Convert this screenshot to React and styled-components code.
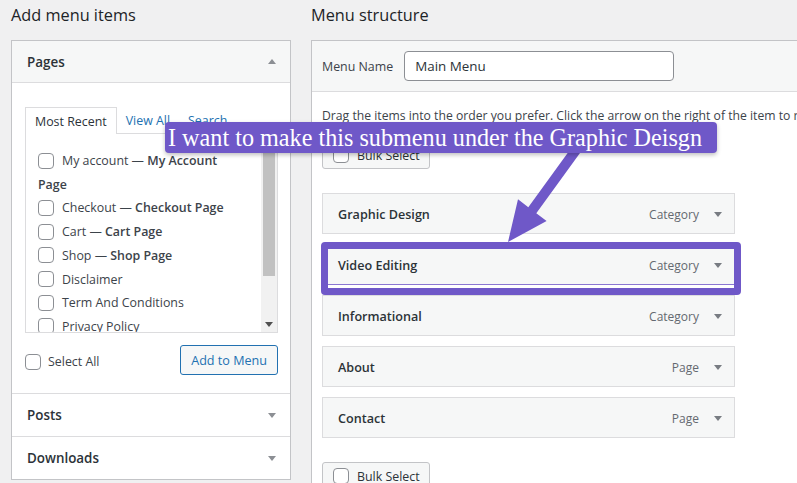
import React from "react";
import styled, { createGlobalStyle } from "styled-components";

const Global = createGlobalStyle`
  html, body { margin: 0; padding: 0; background: #f0f0f1; }
  body { font-family: "Open Sans", "Noto Sans", sans-serif; color: #3c434a; }
  * { box-sizing: border-box; }
`;

const Page = styled.div`
  position: relative;
  width: 797px;
  height: 483px;
  overflow: hidden;
  display: flex;
  gap: 20px;
  padding: 0 0 0 11px;
  background: #f0f0f1;
`;

const Column = styled.div`
  flex: none;
  width: ${(p) => p.$w}px;
  display: flex;
  flex-direction: column;
`;

const Heading = styled.h2`
  margin: 0 0 10px;
  font-size: 16.3px;
  line-height: 30px;
  font-weight: 400;
  color: #1d2327;
`;

const Accordion = styled.div`
  border: 1px solid #c3c4c7;
  background: #fff;
`;

const Section = styled.div`
  & + & { border-top: 1px solid #dcdcde; }
`;

const SectionTitle = styled.div`
  height: 42px;
  display: flex;
  align-items: center;
  justify-content: space-between;
  padding: 0 14px 0 15px;
  background: ${(p) => (p.$open ? "#f6f7f7" : "#fff")};
  border-bottom: ${(p) => (p.$open ? "1px solid #dcdcde" : "none")};
  font-size: 13.4px;
  font-weight: 600;
  color: #2c3338;
`;

const Tri = styled.span`
  width: 0;
  height: 0;
  border-left: 4.5px solid transparent;
  border-right: 4.5px solid transparent;
  ${(p) =>
    p.$up
      ? `border-bottom: 5px solid ${p.$c || "#8c8f94"};`
      : `border-top: 5px solid ${p.$c || "#8c8f94"};`}
`;

const SectionBody = styled.div`
  padding: 24px 12px 18px 13px;
`;

const Tabs = styled.div`
  display: flex;
  align-items: flex-end;
  height: 26px;
  font-size: 12.4px;
`;

const Tab = styled.div`
  height: 26px;
  padding: 0 9px;
  display: flex;
  align-items: center;
  ${(p) =>
    p.$active
      ? `border: 1px solid #dcdcde; border-bottom: none; background: #fff; color: #2c3338; position: relative; z-index: 1; margin-bottom: -1px; height: 27px;`
      : `color: #2271b1;`}
`;

const ListBox = styled.div`
  height: 200px;
  border: 1px solid #dcdcde;
  display: flex;
  overflow: hidden;
`;

const List = styled.ul`
  flex: 1;
  list-style: none;
  margin: 0;
  padding: 15px 14px 0 12px;
  font-size: 12.4px;
  line-height: 23.7px;
  color: #3c434a;
`;

const Item = styled.li`
  margin: 0;
`;

const Box = styled.span`
  display: inline-block;
  width: 16px;
  height: 16px;
  border: 1px solid #8c8f94;
  border-radius: 4px;
  background: #fff;
  vertical-align: -3.5px;
  margin-right: ${(p) => p.$mr ?? 8}px;
`;

const State = styled.span`
  font-weight: 600;
  color: #3c434a;
`;

const Scrollbar = styled.div`
  flex: none;
  width: 16px;
  background: #f1f1f1;
  display: flex;
  flex-direction: column;
  align-items: center;
`;

const ScrollBtn = styled.div`
  flex: none;
  height: 16px;
  width: 16px;
  display: flex;
  align-items: center;
  justify-content: center;
`;

const Thumb = styled.div`
  width: 12px;
  height: 126px;
  background: #c1c1c1;
`;

const Spacer = styled.div`
  flex: 1;
`;

const Actions = styled.div`
  margin-top: 12px;
  display: flex;
  align-items: center;
  justify-content: space-between;
`;

const CheckLabel = styled.label`
  display: flex;
  align-items: center;
  padding-top: 3px;
  font-size: 12.4px;
  color: #3c434a;
`;

const BlueButton = styled.button`
  height: 30px;
  padding: 0 10px;
  border: 1px solid #2271b1;
  border-radius: 3px;
  background: #f6f7f7;
  color: #2271b1;
  font-family: inherit;
  font-size: 12.6px;
`;

const MenuPanel = styled.div`
  border: 1px solid #c3c4c7;
  border-right: none;
  background: #fff;
`;

const MenuHeader = styled.div`
  height: 51px;
  display: flex;
  align-items: center;
  gap: 11px;
  padding: 0 10px;
  background: #f6f7f7;
  border-bottom: 1px solid #dcdcde;
  font-size: 12.4px;
  color: #3c434a;
`;

const NameInput = styled.div`
  width: 270px;
  height: 30px;
  border: 1px solid #8c8f94;
  border-radius: 4px;
  background: #fff;
  display: flex;
  align-items: center;
  padding: 0 10px;
  font-size: 13.4px;
  color: #2c3338;
`;

const MenuBody = styled.div`
  padding: 14px 10px 40px;
`;

const Instructions = styled.p`
  margin: 0;
  font-size: 12.2px;
  line-height: 20px;
  white-space: nowrap;
  color: #3c434a;
`;

const BulkButton = styled.div`
  margin-top: ${(p) => p.$mt}px;
  width: 108px;
  height: 28px;
  border: 1px solid #c3c4c7;
  border-radius: 3px;
  background: #f6f7f7;
  display: flex;
  align-items: center;
  padding-left: 10px;
  font-size: 12.4px;
  color: #2c3338;
`;

const MenuItems = styled.div`
  margin-top: 24px;
  width: 413px;
  display: flex;
  flex-direction: column;
  gap: 10px;
`;

const ItemWrap = styled.div`
  position: relative;
`;

const MenuItem = styled.div`
  height: 41px;
  display: flex;
  align-items: center;
  padding: 1px 12px 0 15px;
  background: #f6f7f7;
  border: 1px solid #dcdcde;
  border-bottom-color: ${(p) => (p.$hl ? "#8a76d2" : "#dcdcde")};
`;

const ItemTitle = styled.span`
  flex: 1;
  font-size: 12.6px;
  font-weight: 600;
  color: #2c3338;
`;

const ItemType = styled.span`
  font-size: 12px;
  color: #646970;
  margin-right: 15px;
`;

const Frame = styled.div`
  position: absolute;
  left: -1px;
  right: -6px;
  top: -2px;
  bottom: -10px;
  border: 7px solid #6f58c8;
  border-radius: 4px;
  pointer-events: none;
`;

const Callout = styled.div`
  position: absolute;
  left: 165px;
  top: 122px;
  width: 552px;
  height: 31px;
  background: #6f58c8;
  border-radius: 4px;
  box-shadow: 0 2px 4px rgba(0, 0, 0, 0.25);
  color: #fff;
  font-family: "Liberation Serif", "Times New Roman", serif;
  font-size: 24.2px;
  line-height: 31px;
  padding-left: 3px;
  white-space: nowrap;
  z-index: 3;
`;

const ArrowSvg = styled.svg`
  position: absolute;
  left: 500px;
  top: 145px;
  z-index: 2;
`;

const pages = [
  ["My account", "My Account Page"],
  ["Checkout", "Checkout Page"],
  ["Cart", "Cart Page"],
  ["Shop", "Shop Page"],
  ["Disclaimer"],
  ["Term And Conditions"],
  ["Privacy Policy"],
  ["Refund Policy"],
];

const menuItems = [
  ["Graphic Design", "Category"],
  ["Video Editing", "Category", true],
  ["Informational", "Category"],
  ["About", "Page"],
  ["Contact", "Page"],
];

export default function App() {
  return (
    <>
      <Global />
      <Page>
        <Column $w={280}>
          <Heading>Add menu items</Heading>
          <Accordion>
            <Section>
              <SectionTitle $open>
                Pages <Tri $up />
              </SectionTitle>
              <SectionBody>
                <Tabs>
                  <Tab $active>Most Recent</Tab>
                  <Tab>View All</Tab>
                  <Tab>Search</Tab>
                </Tabs>
                <ListBox>
                  <List>
                    {pages.map(([t, s], i) => (
                      <Item key={i}>
                        <Box />
                        {t}
                        {s && (
                          <>
                            {" — "}
                            <State>{s}</State>
                          </>
                        )}
                      </Item>
                    ))}
                  </List>
                  <Scrollbar>
                    <ScrollBtn>
                      <Tri $up $c="#505050" />
                    </ScrollBtn>
                    <Thumb />
                    <Spacer />
                    <ScrollBtn>
                      <Tri $c="#505050" />
                    </ScrollBtn>
                  </Scrollbar>
                </ListBox>
                <Actions>
                  <CheckLabel>
                    <Box $mr={7} />
                    Select All
                  </CheckLabel>
                  <BlueButton>Add to Menu</BlueButton>
                </Actions>
              </SectionBody>
            </Section>
            <Section>
              <SectionTitle>
                Posts <Tri />
              </SectionTitle>
            </Section>
            <Section>
              <SectionTitle>
                Downloads <Tri />
              </SectionTitle>
            </Section>
          </Accordion>
        </Column>
        <Column $w={520}>
          <Heading>Menu structure</Heading>
          <MenuPanel>
            <MenuHeader>
              Menu Name
              <NameInput>Main Menu</NameInput>
            </MenuHeader>
            <MenuBody>
              <Instructions>
                Drag the items into the order you prefer. Click the arrow on the right of the item to reveal additional configuration options.
              </Instructions>
              <BulkButton $mt={15}>
                <Box />
                Bulk Select
              </BulkButton>
              <MenuItems>
                {menuItems.map(([t, type, hl]) => (
                  <ItemWrap key={t}>
                    <MenuItem $hl={hl}>
                      <ItemTitle>{t}</ItemTitle>
                      <ItemType>{type}</ItemType>
                      <Tri $c="#787c82" />
                    </MenuItem>
                    {hl && <Frame />}
                  </ItemWrap>
                ))}
              </MenuItems>
              <BulkButton $mt={24}>
                <Box />
                Bulk Select
              </BulkButton>
            </MenuBody>
          </MenuPanel>
        </Column>
        <ArrowSvg width="90" height="100" viewBox="0 0 90 100">
          <polygon
            points="72,2 80,8 36.3,68.2 46.6,76.1 8,97 18,54.3 28.3,62.2"
            fill="#6f58c8"
          />
        </ArrowSvg>
        <Callout>I want to make this submenu under the Graphic Deisgn</Callout>
      </Page>
    </>
  );
}
